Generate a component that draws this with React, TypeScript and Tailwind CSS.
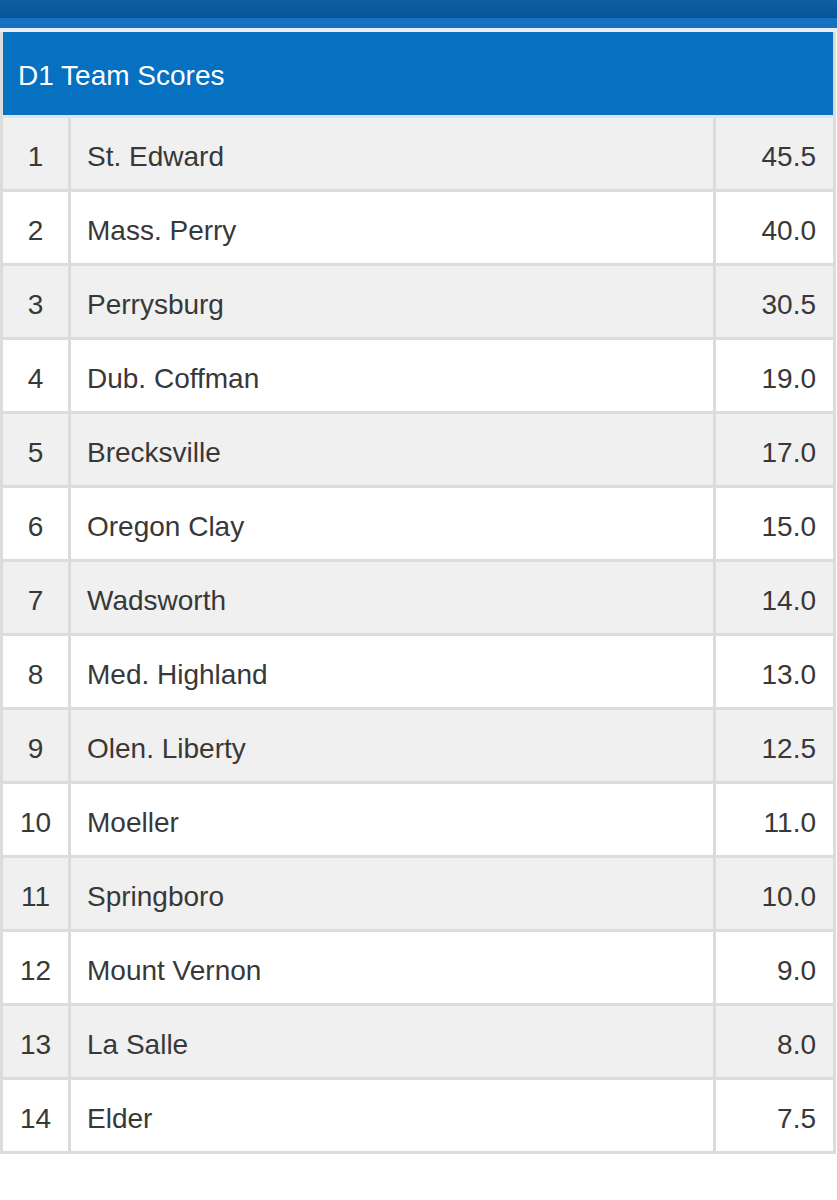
const teams: [number, string, string][] = [
  [1, "St. Edward", "45.5"],
  [2, "Mass. Perry", "40.0"],
  [3, "Perrysburg", "30.5"],
  [4, "Dub. Coffman", "19.0"],
  [5, "Brecksville", "17.0"],
  [6, "Oregon Clay", "15.0"],
  [7, "Wadsworth", "14.0"],
  [8, "Med. Highland", "13.0"],
  [9, "Olen. Liberty", "12.5"],
  [10, "Moeller", "11.0"],
  [11, "Springboro", "10.0"],
  [12, "Mount Vernon", "9.0"],
  [13, "La Salle", "8.0"],
  [14, "Elder", "7.5"],
];

export default function App() {
  return (
    <div
      className="min-h-[1200px] w-[837px] bg-white"
      style={{ fontFamily: '"Liberation Sans", Arial, sans-serif' }}
    >
      <div className="h-[18px] bg-gradient-to-b from-[#0d5fa6] to-[#0a5699] border-b border-[#0a4f8c]" />
      <div className="h-[10px] bg-[#1672c1]" />
      <div className="h-[4px] bg-[#e9eef4]" />

      <div className="w-[836px] border-l-[3px] border-r-[3px] border-[#dcdcdc]">
        <div className="h-[86px] bg-[#0670c1] border-b-[3px] border-[#dfe4ea] flex items-center pl-[15px] pt-[4px]">
          <h1 className="text-[28px] text-white leading-none">D1 Team Scores</h1>
        </div>

        {teams.map(([rank, name, score]) => (
          <div
            key={rank}
            className={`flex h-[74px] border-b-[3px] border-[#dcdcdc] text-[28px] text-[#383838] ${
              rank % 2 === 1 ? "bg-[#f0f0f0]" : "bg-white"
            }`}
          >
            <div className="w-[68px] border-r-[3px] border-[#dcdcdc] flex items-center justify-center pt-[6px]">
              {rank}
            </div>
            <div className="flex-1 border-r-[3px] border-[#dcdcdc] flex items-center pl-[16px] pt-[6px]">
              {name}
            </div>
            <div className="w-[117px] flex items-center justify-end pr-[17px] pt-[6px]">
              {score}
            </div>
          </div>
        ))}
      </div>
    </div>
  );
}
